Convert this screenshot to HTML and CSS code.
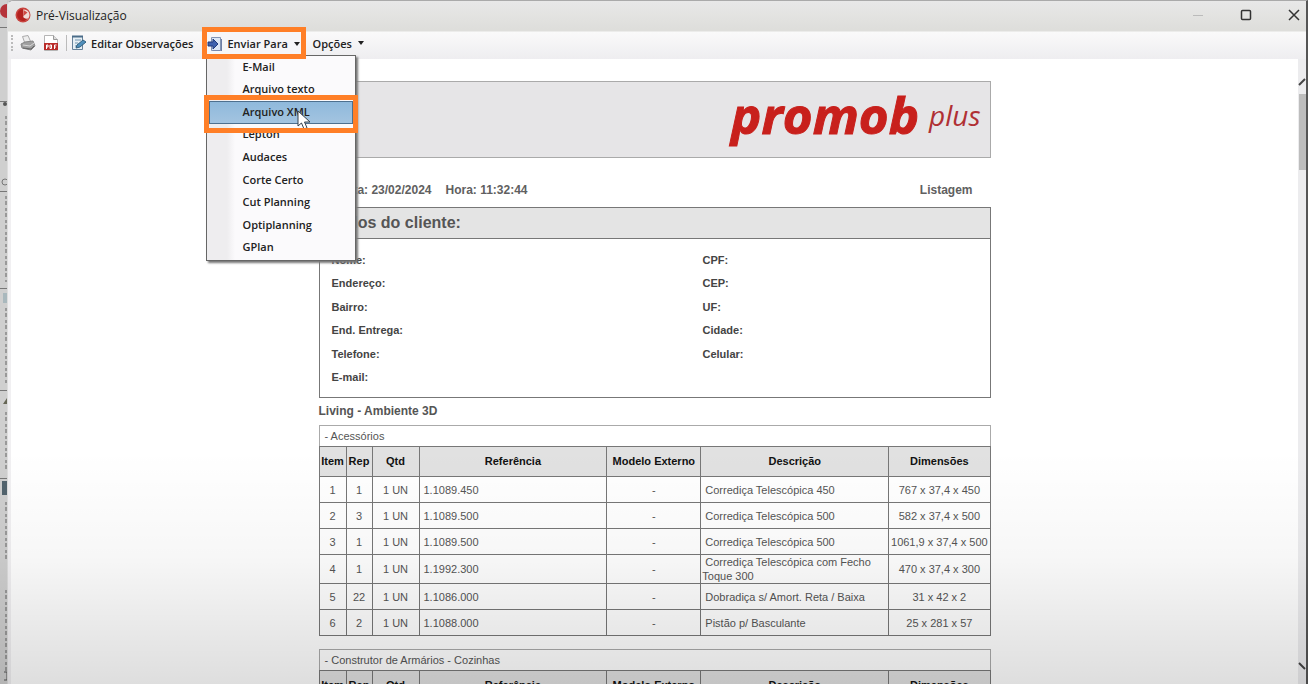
FILE: index.html
```html
<!DOCTYPE html>
<html lang="pt-BR">

<head>
    <meta charset="UTF-8">
    <meta name="viewport" content="width=device-width, initial-scale=1.0">
    <title>Pré-Visualização</title>
    <link rel="stylesheet" href="styles.css">
</head>

<body>
    <div class="desktop">
        <div class="behind">
            <svg width="8" height="684" viewBox="0 0 8 684">
                <circle cx="7" cy="11" r="7" fill="#b5333a"/>
                <path d="M0 101.500h8M0 191.500h8M0 288.500h8M0 390.500h8M0 478.500h8M0 27.500h8" stroke="#777"/>
                <path d="M6 116v48M6 196v86M6 308v76M6 412v60M6 502v60M6 590v84" stroke="#999" stroke-width="2" stroke-dasharray="3 2 4 3"/>
                <circle cx="5" cy="104" r="2" fill="#555"/>
                <circle cx="5" cy="182" r="3" fill="none" stroke="#777"/>
                <rect x="3" y="293" width="5" height="10" fill="#a9b8bd"/>
                <path d="M3 404l4-6v6z" fill="#665"/>
                <path d="M2 481h5v14H2z" fill="#53646e"/>
                <path d="M4 672h3v8H4" fill="none" stroke="#555"/>
            </svg>
        </div>
        <div class="window">
            <header class="titlebar">
                <svg width="16" height="16" viewBox="0 0 16 16">
                    <circle cx="8" cy="8" r="7.500" fill="#c8443f"/>
                    <circle cx="9" cy="8" r="5.500" fill="#f0dcd8"/>
                    <path d="M8 2a6 6 0 1 0 5 9.500C10 12 7.500 11 8.500 8.500L8 2z" fill="#b3211f"/>
                    <path d="M8.500 3l4 2.500-4 3.500z" fill="#cf4a44"/>
                </svg>
                <h1>Pré-Visualização</h1>
                <div class="window-buttons">
                    <button type="button" aria-label="Minimizar">
                        <svg width="12" height="12" viewBox="0 0 12 12"><path d="M1 6.500h10" stroke="#bbb"/></svg>
                    </button>
                    <button type="button" aria-label="Maximizar">
                        <svg width="12" height="12" viewBox="0 0 12 12"><rect x="1.500" y="1.500" width="9" height="9" rx="1" fill="none" stroke="#333" stroke-width="1.500"/></svg>
                    </button>
                    <button type="button" aria-label="Fechar">
                        <svg width="12" height="12" viewBox="0 0 12 12"><path d="M1 1l10 10M11 1L1 11" stroke="#333" stroke-width="1.500"/></svg>
                    </button>
                </div>
            </header>

            <nav class="toolbar">
                <span class="grip"></span>
                <button type="button" class="tool print" aria-label="Imprimir">
                    <svg width="16" height="16" viewBox="0 0 16 16">
                        <path d="M2.500 1.500L8 .5l3 7-6 1z" fill="#eee" stroke="#aaa"/>
                        <path d="M1 9l4-2 8-1 2 5-4 4-9-2z" fill="#a0a0a0" stroke="#868686"/>
                        <path d="M3 10l7 1 4-3" fill="none" stroke="#d8d8d8"/>
                        <path d="M3 13l8 1 3-3" fill="none" stroke="#666"/>
                    </svg>
                </button>
                <button type="button" class="tool pdf" aria-label="PDF">
                    <svg width="14" height="16" viewBox="0 0 14 16">
                        <path d="M.5.5h9l4 4v11H.5z" fill="#fff" stroke="#b5b5b5"/>
                        <path d="M9.500.5v4h4" fill="#ddd" stroke="#999"/>
                        <rect y="8" width="14" height="7" fill="#b92b29"/>
                        <path d="M2.500 14v-4h1.500v2H2.500M6 10v3.500h1.500V10zM10.500 14v-4h2M10.500 12h1.500" fill="none" stroke="#fff"/>
                    </svg>
                </button>
                <span class="separator"></span>
                <button type="button" class="tool edit">
                    <svg width="16" height="16" viewBox="0 0 16 16">
                        <path d="M1.500 1.500h10v13h-10z" fill="#e6eff5" stroke="#67829a"/>
                        <path d="M1 1.500h11" stroke="#4b6d89" stroke-width="2"/>
                        <path d="M4 5h6M4 8h3M4 11h4" stroke="#7094ae"/>
                        <path d="M6 10l6-5 3 2-6 5-4 1z" fill="#4f8fbc" stroke="#34617f"/>
                    </svg>
                    Editar Observações
                </button>
                <div class="dropdown">
                    <button type="button" class="tool send" aria-expanded="true">
                        <svg width="16" height="14" viewBox="0 0 16 14">
                            <path d="M4.500.5h9v13h-9z" fill="#dce7f5" stroke="#8394b3"/>
                            <path d="M14.500 2v12H6" fill="none" stroke="#6f7fa6"/>
                            <path d="M1 5h5V2l5 5-5 5V9H1z" fill="#3f62ad" stroke="#213b7c"/>
                        </svg>
                        Enviar Para
                        <span class="caret"></span>
                    </button>
                    <ul class="menu">
                        <li><button type="button">E-Mail</button></li>
                        <li><button type="button">Arquivo texto</button></li>
                        <li class="selected"><button type="button">Arquivo XML</button>
                            <svg class="cursor" width="14" height="20" viewBox="0 0 14 20">
                                <path d="M1 1v15l3.500-3 2.500 6 3-1.200-2.500-5.800H13z" fill="#fff" stroke="#35414c"/>
                            </svg>
                        </li>
                        <li><button type="button">Lepton</button></li>
                        <li><button type="button">Audaces</button></li>
                        <li><button type="button">Corte Certo</button></li>
                        <li><button type="button">Cut Planning</button></li>
                        <li><button type="button">Optiplanning</button></li>
                        <li><button type="button">GPlan</button></li>
                    </ul>
                    <span class="mark mark-button"></span>
                    <span class="mark mark-item"></span>
                </div>
                <button type="button" class="tool options">Opções <span class="caret"></span></button>
            </nav>

            <div class="viewer">
                <main class="report">
                    <div class="banner">
                        <span class="brand">promob</span>
                        <span class="edition">plus</span>
                    </div>
                    <div class="meta">
                        <span class="date">Data: 23/02/2024</span>
                        <span>Hora: 11:32:44</span>
                        <span class="kind">Listagem</span>
                    </div>

                    <section class="client">
                        <h2>Dados do cliente:</h2>
                        <div class="fields">
                            <span>Nome:</span><span>CPF:</span>
                            <span>Endereço:</span><span>CEP:</span>
                            <span>Bairro:</span><span>UF:</span>
                            <span>End. Entrega:</span><span>Cidade:</span>
                            <span>Telefone:</span><span>Celular:</span>
                            <span>E-mail:</span>
                        </div>
                    </section>

                    <h3>Living - Ambiente 3D</h3>

                    <table class="items">
                        <caption>- Acessórios</caption>
                        <colgroup>
                            <col class="c-item"><col class="c-rep"><col class="c-qtd"><col class="c-ref"><col class="c-mod"><col class="c-desc"><col class="c-dim">
                        </colgroup>
                        <thead>
                            <tr><th>Item</th><th>Rep</th><th>Qtd</th><th>Referência</th><th>Modelo Externo</th><th>Descrição</th><th>Dimensões</th></tr>
                        </thead>
                        <tbody>
                            <tr><td>1</td><td>1</td><td>1 UN</td><td class="text">1.1089.450</td><td>-</td><td class="text">Corrediça Telescópica 450</td><td>767 x 37,4 x 450</td></tr>
                            <tr><td>2</td><td>3</td><td>1 UN</td><td class="text">1.1089.500</td><td>-</td><td class="text">Corrediça Telescópica 500</td><td>582 x 37,4 x 500</td></tr>
                            <tr><td>3</td><td>1</td><td>1 UN</td><td class="text">1.1089.500</td><td>-</td><td class="text">Corrediça Telescópica 500</td><td>1061,9 x 37,4 x 500</td></tr>
                            <tr><td>4</td><td>1</td><td>1 UN</td><td class="text">1.1992.300</td><td>-</td><td class="text">Corrediça Telescópica com Fecho Toque 300</td><td>470 x 37,4 x 300</td></tr>
                            <tr><td>5</td><td>22</td><td>1 UN</td><td class="text">1.1086.000</td><td>-</td><td class="text">Dobradiça s/ Amort. Reta / Baixa</td><td>31 x 42 x 2</td></tr>
                            <tr><td>6</td><td>2</td><td>1 UN</td><td class="text">1.1088.000</td><td>-</td><td class="text">Pistão p/ Basculante</td><td>25 x 281 x 57</td></tr>
                        </tbody>
                    </table>

                    <table class="items">
                        <caption>- Construtor de Armários - Cozinhas</caption>
                        <colgroup>
                            <col class="c-item"><col class="c-rep"><col class="c-qtd"><col class="c-ref"><col class="c-mod"><col class="c-desc"><col class="c-dim">
                        </colgroup>
                        <thead>
                            <tr><th>Item</th><th>Rep</th><th>Qtd</th><th>Referência</th><th>Modelo Externo</th><th>Descrição</th><th>Dimensões</th></tr>
                        </thead>
                    </table>
                </main>
                <div class="scrollbar">
                    <svg width="8" height="8" viewBox="0 0 8 8"><path d="M1 7l6-6" stroke="#444" stroke-width="2"/></svg>
                    <span class="thumb"></span>
                    <svg width="8" height="8" viewBox="0 0 8 8"><path d="M1 1l6 6" stroke="#444" stroke-width="2"/></svg>
                </div>
            </div>
        </div>
        <div class="shade"></div>
    </div>
</body>

</html>
```
FILE: styles.css
```css
* {
    box-sizing: border-box;
}

body {
    margin: 0;
    height: 100vh;
    overflow: hidden;
    font-family: "Open Sans", "Noto Sans", sans-serif;
    font-size: 12px;
    color: #222;
}

button {
    font: inherit;
    color: inherit;
    background: none;
    border: none;
    padding: 0;
}

.desktop {
    position: relative;
    display: flex;
    height: 100vh;
    background: #c9c9c9;
}

.behind {
    width: 7px;
    overflow: hidden;
    background: #cfcfcf;
}

.window {
    flex: 1;
    min-width: 0;
    display: flex;
    flex-direction: column;
    background: #f1f0f2;
    border-top: 1px solid #aaa;
    border-right: 2px solid #555;
    border-left: 1px solid #ddd;
    border-top-left-radius: 6px;
}

/* title bar */
.titlebar {
    display: flex;
    align-items: center;
    height: 28px;
    padding: 0 6px 0 7px;
    background: linear-gradient(#e8e8e8, #dededb);
    border-top-left-radius: 6px;
}

.titlebar h1 {
    margin: 0 auto 0 5px;
    font-size: 12px;
    font-weight: 400;
}

.window-buttons {
    display: flex;
    gap: 36px;
}

.window-buttons button {
    display: flex;
}

/* toolbar */
.toolbar {
    display: flex;
    align-items: center;
    height: 30px;
    padding: 0 0 2px 3px;
    background: linear-gradient(#dededb 2px, #fafafa 3px, #eeedf0);
    font-size: 11px;
    font-weight: 600;
}

.tool {
    display: flex;
    align-items: center;
    gap: 4px;
    white-space: nowrap;
}

.grip {
    height: 16px;
    margin-right: 7px;
    border-left: 2px dotted #bbb;
}

.pdf {
    margin-left: 8px;
}

.separator {
    height: 16px;
    margin: 0 4px 0 8px;
    border-left: 1px solid #bbb;
}

.dropdown {
    position: relative;
    width: 96px;
    margin: 0 10px 0 13px;
}

.send {
    width: 100%;
    height: 24px;
    background: #f6f6f8;
    border: 1px solid #777;
    border-bottom: none;
}

.caret {
    margin-left: 2px;
    border: 3px solid transparent;
    border-top: 4px solid #222;
    border-bottom: none;
}

.menu {
    position: absolute;
    z-index: 2;
    top: 24px;
    left: 0;
    width: 150px;
    height: 206px;
    margin: 0;
    padding: 0 2px 1px;
    display: grid;
    grid-auto-rows: 1fr;
    list-style: none;
    background: linear-gradient(90deg, #eeedef 20px, #fbfafc 28px);
    border: 1px solid #666;
    box-shadow: 2px 2px 2px #777;
}

.menu li {
    position: relative;
}

.menu button {
    width: 100%;
    height: 100%;
    padding: 0 0 2px 33px;
    text-align: left;
}

.menu .selected button {
    background: linear-gradient(#8fb9dc, #a3c4e0);
    border: 1px solid #4d708f;
    padding-left: 32px;
}

.cursor {
    position: absolute;
    top: 9px;
    left: 88px;
}

.mark {
    position: absolute;
    z-index: 3;
    border: 5px solid #ff7f27;
    pointer-events: none;
}

.mark-button {
    top: -4px;
    left: -4px;
    width: 104px;
    height: 32px;
}

.mark-item {
    top: 64px;
    left: -2px;
    width: 154px;
    height: 38px;
}

/* report page */
.viewer {
    flex: 1;
    min-height: 0;
    display: flex;
    margin-left: 3px;
    overflow: hidden;
    background: #fff;
}

.report {
    width: 672px;
    margin: 0 auto;
    padding-top: 22px;
    font-family: "Liberation Sans", Arial, sans-serif;
    color: #444;
}

.banner {
    display: flex;
    justify-content: flex-end;
    gap: 10px;
    height: 77px;
    padding: 0 9px;
    font-family: "Open Sans", "Noto Sans", sans-serif;
    font-style: italic;
    background: #e6e5e7;
    border: 1px solid #aaa;
}

.brand {
    font-size: 51px;
    font-weight: 700;
    line-height: 64px;
    color: #c8201c;
    -webkit-text-stroke: 1px #c8201c;
}

.edition {
    font-size: 28px;
    line-height: 66px;
    color: #b03034;
}

.meta {
    display: flex;
    gap: 14px;
    height: 49px;
    padding: 0 18px 0 13px;
    font-size: 12px;
    font-weight: 700;
    line-height: 64px;
    color: #606060;
}

.date {
    width: 100px;
    display: flex;
    justify-content: flex-end;
    white-space: nowrap;
}

.kind {
    margin-left: auto;
}

.client {
    border: 1px solid #777;
}

.client h2 {
    margin: 0;
    padding-left: 8px;
    font-size: 16px;
    line-height: 30px;
    color: #555;
    background: #e4e4e4;
    border-bottom: 1px solid #777;
}

.fields {
    display: grid;
    grid-template-columns: 371px 1fr;
    grid-auto-rows: 1fr;
    align-items: center;
    height: 158px;
    padding: 9px 12px 8px;
    font-size: 11px;
    font-weight: 700;
}

h3 {
    margin: 0;
    font-size: 12px;
    line-height: 27px;
    color: #555;
}

.items {
    width: 100%;
    margin-bottom: 13px;
    table-layout: fixed;
    border-collapse: collapse;
    font-size: 11px;
    line-height: 14px;
    color: #555;
}

.items caption {
    padding: 3px 5px;
    text-align: left;
    border: 1px solid #aaa;
    border-bottom: none;
}

.items th,
.items td {
    height: 26px;
    padding: 0;
    text-align: center;
    border: 1px solid #777;
}

.items th {
    height: 30px;
    padding-bottom: 2px;
    font-size: 11px;
    color: #111;
    background: #e1e1e1;
    white-space: nowrap;
}

.items .text {
    padding-left: 1px;
    text-align: left;
    text-indent: 3px;
}

.c-item {
    width: 27px;
}

.c-rep {
    width: 26px;
}

.c-qtd {
    width: 47px;
}

.c-ref,
.c-desc {
    width: 28%;
}

.c-mod {
    width: 14%;
}

.scrollbar {
    display: flex;
    flex-direction: column;
    width: 8px;
    padding: 19px 0 14px;
    background: #ececee;
}

.thumb {
    height: 76px;
    margin: 8px 0 auto 1px;
    background: #bdbdbd;
}

/* darkening towards the bottom of the screen */
.shade {
    position: absolute;
    right: 0;
    bottom: 0;
    left: 0;
    height: 234px;
    background: linear-gradient(rgba(0, 0, 0, 0), rgba(0, 0, 0, 0.03) 45%, rgba(0, 0, 0, 0.13));
    pointer-events: none;
}
```
